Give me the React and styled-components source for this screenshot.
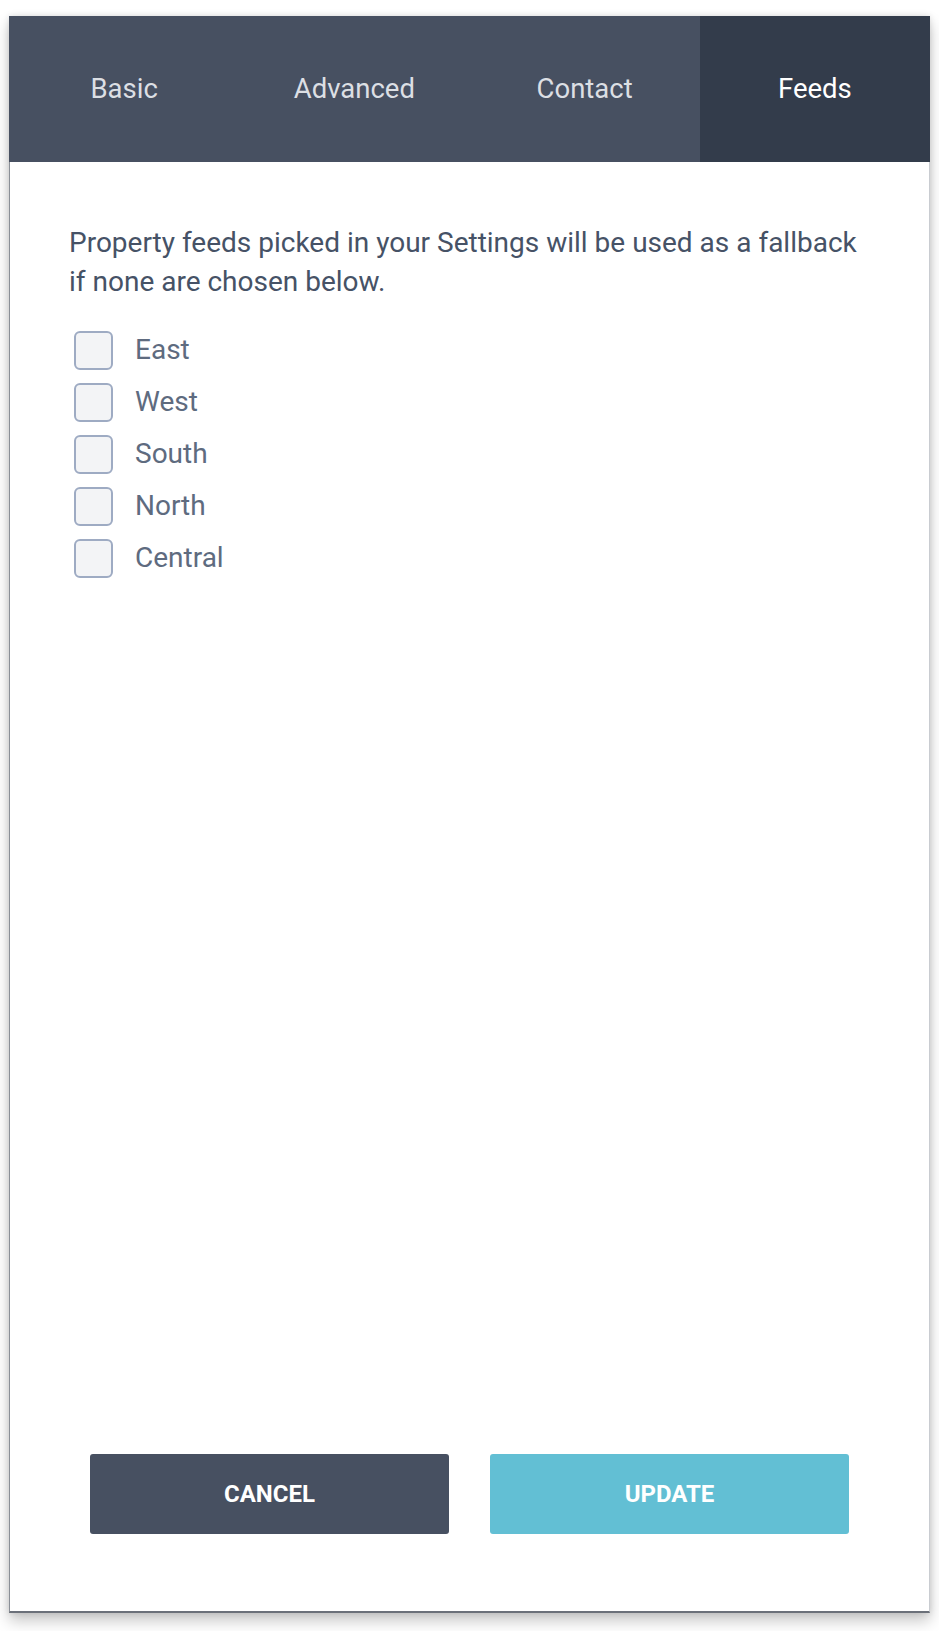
import React, { useState } from "react";
import styled, { createGlobalStyle, css } from "styled-components";

const GlobalStyle = createGlobalStyle`
  html, body {
    margin: 0;
    padding: 0;
    background: #ffffff;
  }
  body {
    font-family: Roboto, "Liberation Sans", Arial, sans-serif;
  }
`;

const Page = styled.div`
  padding: 16px 9px 18px 9px;
`;

const Panel = styled.div`
  width: 921px;
  height: 1597px;
  display: flex;
  flex-direction: column;
  background: #ffffff;
  border-left: 1px solid #8a8f97;
  border-right: 1px solid #c9ccd1;
  border-bottom: 2px solid #6b7079;
  box-sizing: border-box;
  box-shadow: 0 8px 14px rgba(0, 0, 0, 0.22), 0 0 6px rgba(0, 0, 0, 0.12);
`;

const TabBar = styled.div`
  display: grid;
  grid-template-columns: repeat(4, 1fr);
  height: 146px;
  background: #475061;
  margin: 0 -1px;
`;

const Tab = styled.button`
  border: none;
  margin: 0;
  padding: 0 0 2px;
  font-family: Roboto, "Liberation Sans", Arial, sans-serif;
  font-size: 27.5px;
  font-weight: 400;
  background: transparent;
  color: #dcdfe4;
  cursor: pointer;
  display: flex;
  align-items: center;
  justify-content: center;

  ${({ $active }) =>
    $active &&
    css`
      background: #333c4b;
      color: #ffffff;
    `}
`;

const Body = styled.div`
  flex: 1;
  padding: 61px 58px 0 59px;
`;

const Intro = styled.p`
  margin: 0 0 30px;
  font-size: 28px;
  line-height: 39px;
  color: #465266;
`;

const OptionList = styled.div`
  display: flex;
  flex-direction: column;
  gap: 13px;
  padding-left: 5px;
`;

const Option = styled.label`
  display: flex;
  align-items: center;
  gap: 22px;
  cursor: pointer;
`;

const Box = styled.span`
  width: 39px;
  height: 39px;
  box-sizing: border-box;
  border: 2px solid #9eabc3;
  border-radius: 6px;
  background: #f3f4f6;
  display: flex;
  align-items: center;
  justify-content: center;
  color: #475061;
  font-size: 24px;
`;

const OptionText = styled.span`
  font-size: 28px;
  color: #5e6b7f;
  line-height: 39px;
  margin-top: -3px;
`;

const Footer = styled.div`
  display: flex;
  justify-content: center;
  gap: 41px;
  padding-bottom: 77px;
`;

const ActionButton = styled.button`
  width: 359px;
  height: 80px;
  border: none;
  border-radius: 3px;
  font-family: Roboto, "Liberation Sans", Arial, sans-serif;
  font-size: 24px;
  font-weight: 700;
  text-transform: uppercase;
  color: #ffffff;
  cursor: pointer;
  background: ${({ $primary }) => ($primary ? "#62bfd4" : "#475061")};
`;

const tabs = ["Basic", "Advanced", "Contact", "Feeds"];
const feeds = ["East", "West", "South", "North", "Central"];

export default function App() {
  const [active, setActive] = useState("Feeds");
  const [picked, setPicked] = useState({});

  return (
    <Page>
      <GlobalStyle />
      <Panel>
        <TabBar>
          {tabs.map((t) => (
            <Tab key={t} $active={t === active} onClick={() => setActive(t)}>
              {t}
            </Tab>
          ))}
        </TabBar>
        <Body>
          <Intro>
            Property feeds picked in your Settings will be used as a fallback
            if none are chosen below.
          </Intro>
          <OptionList>
            {feeds.map((f) => (
              <Option
                key={f}
                onClick={() => setPicked((p) => ({ ...p, [f]: !p[f] }))}
              >
                <Box>{picked[f] ? "✓" : null}</Box>
                <OptionText>{f}</OptionText>
              </Option>
            ))}
          </OptionList>
        </Body>
        <Footer>
          <ActionButton>Cancel</ActionButton>
          <ActionButton $primary>Update</ActionButton>
        </Footer>
      </Panel>
    </Page>
  );
}
